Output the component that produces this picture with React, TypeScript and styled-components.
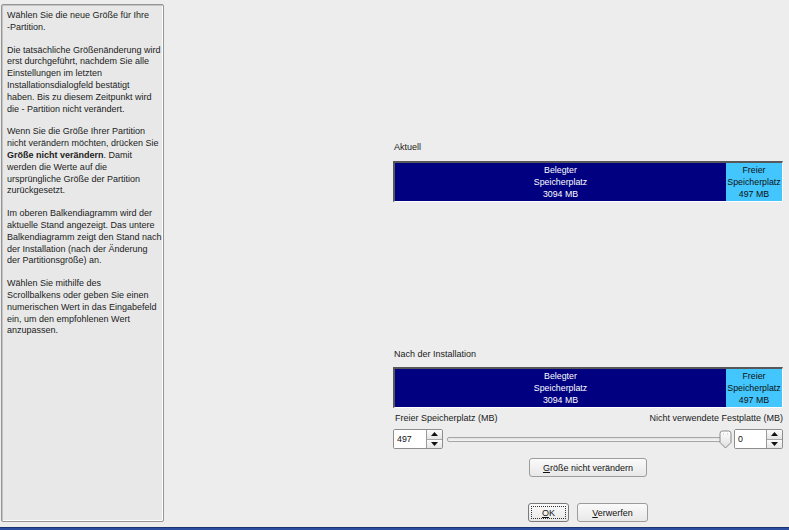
import styled, { createGlobalStyle } from "styled-components";

const GlobalStyle = createGlobalStyle`
  html, body {
    margin: 0;
    padding: 0;
    background: #ededed;
  }
  body {
    font-family: "Liberation Sans", Arial, sans-serif;
    font-size: 9px;
    color: #1a1a1a;
  }
`;

const Screen = styled.div`
  display: flex;
  flex-direction: column;
  width: 789px;
  height: 530px;
  overflow: hidden;
`;

const Main = styled.div`
  flex: 1;
  display: grid;
  grid-template-columns: 163px 1fr 390px;
  padding: 4px 6px 5px 1px;
`;

const TaskStrip = styled.div`
  height: 3px;
  background: #2d4d9e;
  border-top: 1px solid #1c3372;
`;

const HelpPanel = styled.div`
  background: #e8e8e8;
  border: 1px solid #959595;
  border-radius: 2px;
  box-shadow: inset 1px 1px 0 #c4c4c4, inset -1px -1px 0 #ffffff;
  padding: 5px 5px;
  line-height: 11.8px;
  font-size: 9px;
  color: #222;
  white-space: nowrap;

  p {
    margin: 0 0 11px 0;
  }
  b {
    font-weight: bold;
  }
`;

const Content = styled.div`
  grid-column: 3;
  display: flex;
  flex-direction: column;
  padding-top: 137px;
`;

const Label = styled.div<{ $gap?: number }>`
  line-height: 12px;
  height: 12px;
  padding-left: 1px;
  margin-top: ${p => p.$gap ?? 0}px;
  white-space: nowrap;
`;

const BarFrame = styled.div<{ $gap?: number }>`
  display: flex;
  height: 38px;
  margin-top: ${p => p.$gap ?? 0}px;
  border-style: solid;
  border-width: 2px 1px 1px 2px;
  border-color: #585858 #ffffff #ffffff #585858;
`;

const Segment = styled.div<{ $grow: number; $free?: boolean }>`
  flex: ${p => p.$grow} 1 0;
  min-width: ${p => (p.$free ? "56px" : "0")};
  display: flex;
  flex-direction: column;
  align-items: center;
  justify-content: center;
  background: ${p => (p.$free ? "#43c6fd" : "#000080")};
  color: ${p => (p.$free ? "#101010" : "#ffffff")};
  line-height: 12px;
  white-space: nowrap;
  font-size: 8.8px;
`;

const RangeLabels = styled.div`
  display: flex;
  justify-content: space-between;
  margin-top: 4px;
  line-height: 12px;
  padding: 0 0 0 2px;
`;

const ControlRow = styled.div`
  display: flex;
  align-items: center;
  margin-top: 5px;
  height: 20px;
`;

const Spin = styled.div<{ $width: number }>`
  display: flex;
  width: ${p => p.$width}px;
  height: 20px;
  border: 1px solid #8e8e8e;
  border-radius: 2px;
  background: #fff;
  box-sizing: border-box;
  overflow: hidden;
`;

const SpinInput = styled.input`
  flex: 1;
  min-width: 0;
  border: none;
  outline: none;
  padding: 0 3px;
  font-family: "Liberation Sans", Arial, sans-serif;
  font-size: 8.8px;
  color: #111;
  background: #fff;
`;

const SpinButtons = styled.div`
  display: flex;
  flex-direction: column;
  width: 15px;
  border-left: 1px solid #9a9a9a;
`;

const SpinButton = styled.div<{ $down?: boolean }>`
  flex: 1;
  display: flex;
  align-items: center;
  justify-content: center;
  background: linear-gradient(#fbfbfb, #e4e4e4);
  border-top: ${p => (p.$down ? "1px solid #a8a8a8" : "none")};
`;

const Slider = styled.div`
  flex: 1;
  display: flex;
  align-items: center;
  margin: 0 2px 0 4px;
`;

const Track = styled.div`
  flex: 1;
  height: 3px;
  border: 1px solid #a6a6a6;
  border-radius: 2px;
  background: linear-gradient(#e2e2e2, #f6f6f6);
`;

const Thumb = styled.svg`
  flex: none;
  margin-left: -4px;
  margin-top: 1px;
`;

const Centered = styled.div<{ $gap: number }>`
  display: flex;
  justify-content: center;
  gap: 8px;
  margin-top: ${p => p.$gap}px;
`;

const Button = styled.button<{ $width: number; $default?: boolean }>`
  width: ${p => p.$width}px;
  height: 19px;
  padding: 0;
  font-family: "Liberation Sans", Arial, sans-serif;
  font-size: 9px;
  color: #111;
  border: 1px solid ${p => (p.$default ? "#7a7a7a" : "#9c9c9c")};
  border-radius: 3px;
  background: linear-gradient(#fafafa, #e8e8e8);
  display: flex;
  align-items: center;
  justify-content: center;
  position: relative;

  u {
    text-decoration: underline;
  }
`;

const FocusRing = styled.span`
  position: absolute;
  inset: 2px;
  border: 1px dotted #333;
`;

function Arrow({ down }: { down?: boolean }) {
  return (
    <svg width="7" height="4" viewBox="0 0 7 4">
      <path d={down ? "M0 0 H7 L3.5 4 Z" : "M0 4 H7 L3.5 0 Z"} fill="#111" />
    </svg>
  );
}

function SpinBox({ value, width }: { value: string; width: number }) {
  return (
    <Spin $width={width}>
      <SpinInput value={value} readOnly />
      <SpinButtons>
        <SpinButton><Arrow /></SpinButton>
        <SpinButton $down><Arrow down /></SpinButton>
      </SpinButtons>
    </Spin>
  );
}

function UsageBar({ used, free, gap }: { used: number; free: number; gap: number }) {
  return (
    <BarFrame $gap={gap}>
      <Segment $grow={used}>
        <span>Belegter</span>
        <span>Speicherplatz</span>
        <span>{used} MB</span>
      </Segment>
      <Segment $grow={free} $free>
        <span>Freier</span>
        <span>Speicherplatz</span>
        <span>{free} MB</span>
      </Segment>
    </BarFrame>
  );
}

export default function App() {
  return (
    <>
      <GlobalStyle />
      <Screen>
        <Main>
          <HelpPanel>
            <p>
              Wählen Sie die neue Größe für Ihre<br />
              -Partition.
            </p>
            <p>
              Die tatsächliche Größenänderung wird<br />
              erst durchgeführt, nachdem Sie alle<br />
              Einstellungen im letzten<br />
              Installationsdialogfeld bestätigt<br />
              haben. Bis zu diesem Zeitpunkt wird<br />
              die - Partition nicht verändert.
            </p>
            <p>
              Wenn Sie die Größe Ihrer Partition<br />
              nicht verändern möchten, drücken Sie<br />
              <b>Größe nicht verändern</b>. Damit<br />
              werden die Werte auf die<br />
              ursprüngliche Größe der Partition<br />
              zurückgesetzt.
            </p>
            <p>
              Im oberen Balkendiagramm wird der<br />
              aktuelle Stand angezeigt. Das untere<br />
              Balkendiagramm zeigt den Stand nach<br />
              der Installation (nach der Änderung<br />
              der Partitionsgröße) an.
            </p>
            <p>
              Wählen Sie mithilfe des<br />
              Scrollbalkens oder geben Sie einen<br />
              numerischen Wert in das Eingabefeld<br />
              ein, um den empfohlenen Wert<br />
              anzupassen.
            </p>
          </HelpPanel>

          <Content>
            <Label>Aktuell</Label>
            <UsageBar used={3094} free={497} gap={8} />

            <Label $gap={146}>Nach der Installation</Label>
            <UsageBar used={3094} free={497} gap={7} />

            <RangeLabels>
              <span>Freier Speicherplatz (MB)</span>
              <span>Nicht verwendete Festplatte (MB)</span>
            </RangeLabels>
            <ControlRow>
              <SpinBox value="497" width={50} />
              <Slider>
                <Track />
                <Thumb width="13" height="19" viewBox="0 0 13 19">
                  <defs>
                    <linearGradient id="thumbFill" x1="0" y1="0" x2="0" y2="1">
                      <stop offset="0" stopColor="#ffffff" />
                      <stop offset="1" stopColor="#dedede" />
                    </linearGradient>
                  </defs>
                  <path
                    d="M1 3.5 Q1 1 3.5 1 H9.5 Q12 1 12 3.5 V12.5 L6.5 18 L1 12.5 Z"
                    fill="url(#thumbFill)"
                    stroke="#8a8a8a"
                  />
                  <path d="M4 4 h1 M8 4 h1" stroke="#c0c0c0" />
                </Thumb>
              </Slider>
              <SpinBox value="0" width={49} />
            </ControlRow>

            <Centered $gap={9}>
              <Button $width={118}><span><u>G</u>röße nicht verändern</span></Button>
            </Centered>

            <Centered $gap={26}>
              <Button $width={41} $default>
                <FocusRing />
                <span><u>O</u>K</span>
              </Button>
              <Button $width={71}><span><u>V</u>erwerfen</span></Button>
            </Centered>
          </Content>
        </Main>
        <TaskStrip />
      </Screen>
    </>
  );
}
